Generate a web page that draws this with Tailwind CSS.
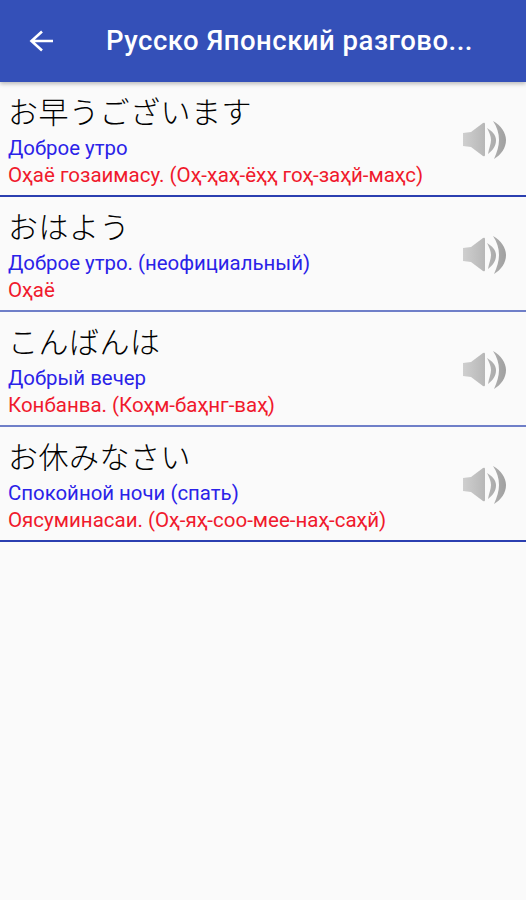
<!DOCTYPE html>
<html lang="ru">
<head>
  <meta charset="UTF-8">
  <title>Русско Японский разговорник</title>
  <script src="https://cdn.jsdelivr.net/npm/@tailwindcss/browser@4"></script>
</head>
<body class="bg-[#fafafa] font-['Roboto','Noto_Sans_CJK_JP',sans-serif]">
  <svg class="absolute w-0 h-0">
    <defs>
      <linearGradient id="speaker-fill" gradientUnits="userSpaceOnUse" x1="0" x2="44" y1="0" y2="0">
        <stop offset="0" stop-color="#d0d0d0"/>
        <stop offset="0.5" stop-color="#b8b8b8"/>
        <stop offset="1" stop-color="#a0a0a0"/>
      </linearGradient>
    </defs>
    <symbol id="speaker" viewBox="0 0 44 42">
      <path d="M1 14 9 13 21 4Q23 3 23 5V36Q23 38 21 37L9 28 1 27Z"/>
      <path d="M25 9C30 12 34 16 34 21 34 27 31 31 26 35 27 29 29 25 29 21 29 17 27 13 25 9Z"/>
      <path d="M31 2C39 6 44 14 44 21 44 29 39 36 32 40 35 33 37 27 37 21 37 14 35 8 31 2Z"/>
    </symbol>
  </svg>
  <div class="w-[526px] h-[900px] overflow-hidden">
    <header class="relative z-10 flex items-center h-[82px] bg-[#3450b8] shadow-[0_2px_4px_rgba(0,0,0,0.25)] text-white">
      <svg class="ml-[29px] w-[25px] h-[22px]" viewBox="0 0 25 22" fill="none" stroke="white" stroke-width="2.6">
        <path d="M24 11H3M13 1.500 2.500 11 13 20.500"/>
      </svg>
      <h1 class="ml-[52px] whitespace-nowrap text-[27.500px] leading-8 font-medium tracking-[0.5px]">Русско Японский разгово...</h1>
    </header>

    <ul>
      <li class="flex justify-between h-[115px] border-b-2 border-[#2b3fb0]">
        <div class="pl-2 pt-[12px]">
          <p class="text-[30px] leading-[38px] font-light text-black tracking-[0.5px]">お早うございます</p>
          <p class="mt-[3px] text-[20.400px] leading-[26px] text-[#2a22e8]">Доброе утро</p>
          <p class="mt-[1px] text-[20.500px] leading-[26px] text-[#f0192c]">Оҳаё гозаимасу. (Оҳ-ҳаҳ-ёҳҳ гоҳ-заҳй-маҳс)</p>
        </div>
        <svg class="mt-[37px] mr-[20px] w-[44px] h-[42px] blur-[0.6px] fill-[url(#speaker-fill)]"><use href="#speaker"/></svg>
      </li>
      <li class="flex justify-between h-[115px] border-b-2 border-[#6f7fc8]">
        <div class="pl-2 pt-[12px]">
          <p class="text-[30px] leading-[38px] font-light text-black tracking-[0.5px]">おはよう</p>
          <p class="mt-[3px] text-[20.400px] leading-[26px] text-[#2a22e8]">Доброе утро. (неофициальный)</p>
          <p class="mt-[1px] text-[20.500px] leading-[26px] text-[#f0192c]">Оҳаё</p>
        </div>
        <svg class="mt-[37px] mr-[20px] w-[44px] h-[42px] blur-[0.6px] fill-[url(#speaker-fill)]"><use href="#speaker"/></svg>
      </li>
      <li class="flex justify-between h-[115px] border-b-2 border-[#6f7fc8]">
        <div class="pl-2 pt-[12px]">
          <p class="text-[30px] leading-[38px] font-light text-black tracking-[0.5px]">こんばんは</p>
          <p class="mt-[3px] text-[20.400px] leading-[26px] text-[#2a22e8]">Добрый вечер</p>
          <p class="mt-[1px] text-[20.500px] leading-[26px] text-[#f0192c]">Конбанва. (Коҳм-баҳнг-ваҳ)</p>
        </div>
        <svg class="mt-[37px] mr-[20px] w-[44px] h-[42px] blur-[0.6px] fill-[url(#speaker-fill)]"><use href="#speaker"/></svg>
      </li>
      <li class="flex justify-between h-[115px] border-b-2 border-[#2b3fb0]">
        <div class="pl-2 pt-[12px]">
          <p class="text-[30px] leading-[38px] font-light text-black tracking-[0.5px]">お休みなさい</p>
          <p class="mt-[3px] text-[20.400px] leading-[26px] text-[#2a22e8]">Спокойной ночи (спать)</p>
          <p class="mt-[1px] text-[20.500px] leading-[26px] text-[#f0192c]">Оясуминасаи. (Оҳ-яҳ-соо-мее-наҳ-саҳй)</p>
        </div>
        <svg class="mt-[37px] mr-[20px] w-[44px] h-[42px] blur-[0.6px] fill-[url(#speaker-fill)]"><use href="#speaker"/></svg>
      </li>
    </ul>
  </div>
</body>
</html>
